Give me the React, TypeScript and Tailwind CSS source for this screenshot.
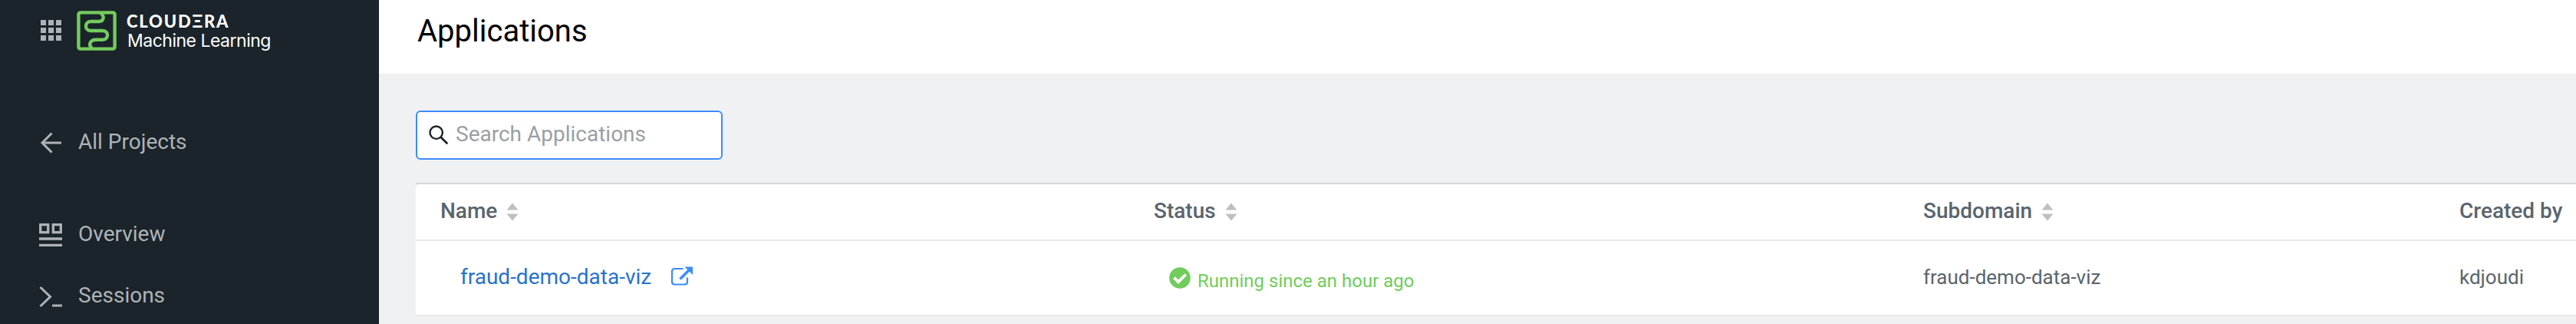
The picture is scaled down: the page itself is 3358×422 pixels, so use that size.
import type { ReactNode } from "react";

function GridIcon() {
  const cells = [0, 10, 20];
  return (
    <svg width="27" height="27" viewBox="0 0 27 27" fill="#afb3b7">
      {cells.map((y) => cells.map((x) => <rect key={`${x}-${y}`} x={x} y={y} width="7" height="7" />))}
    </svg>
  );
}

function LogoMark() {
  return (
    <svg width="52" height="52" viewBox="0 0 52 52" fill="none" stroke="#74cb5d" strokeWidth="4.4">
      <rect x="2.4" y="2.4" width="47.2" height="47.2" rx="2.4" />
      <path d="M31 3C37 7 35 14 29 14H18C10 14 10 26 18 26H34C42 26 42 37.700 34 37.700H25C17 37.700 15 45 20 49" />
    </svg>
  );
}

function BackIcon() {
  return (
    <svg width="30" height="30" viewBox="0 0 30 30" fill="none" stroke="#afb3b7" strokeWidth="3">
      <path d="M16.500 2.500L4 15L16.500 27.500M4 15H29" />
    </svg>
  );
}

function OverviewIcon() {
  return (
    <svg width="30" height="30" viewBox="0 0 30 30" fill="none" stroke="#afb3b7" strokeWidth="3.300">
      <path d="M1.700 1.700H11.700V11.700H1.700ZM18.300 1.700H28.300V11.700H18.300ZM0 20H30M0 28.300H30" />
    </svg>
  );
}

function SessionsIcon() {
  return (
    <svg width="30" height="30" viewBox="0 0 30 30" fill="none" stroke="#afb3b7" strokeWidth="3">
      <path d="M1.500 3L14.500 15.500L1.500 28M17 27H30" />
    </svg>
  );
}

function SearchIcon() {
  return (
    <svg width="26" height="26" viewBox="0 0 26 26" fill="none" stroke="#1b2329" strokeWidth="2.400">
      <circle cx="9.700" cy="9.700" r="8.200" />
      <path d="M15.500 15.500L24.300 24.300" strokeWidth="2.800" />
    </svg>
  );
}

function SortIcon() {
  return (
    <svg width="16" height="24" viewBox="0 0 16 24" fill="#bfbfbf">
      <path d="M8 0.500L15.500 9.500H0.500ZM8 23.500L15.500 14.500H0.500Z" />
    </svg>
  );
}

function ExternalIcon() {
  return (
    <svg width="30" height="26" viewBox="0 0 30 26" fill="none" stroke="#3b8cf8" strokeWidth="2.200">
      <path d="M16.500 3H5.500Q2 3 2 6.500V20Q2 23.500 5.500 23.500H18.500Q22 23.500 22 20V14.500" />
      <path d="M12.500 16.500L25 4" strokeWidth="3.600" />
      <path d="M18.500 0.500H29V11Z" fill="#3b8cf8" stroke="none" />
    </svg>
  );
}

function CheckIcon() {
  return (
    <svg width="28" height="28" viewBox="0 0 28 28" fill="none">
      <circle cx="14" cy="14" r="13.800" fill="#71cc5d" />
      <path d="M6.500 13.700L12 19.200L21.700 9.500" stroke="#fff" strokeWidth="3.800" />
    </svg>
  );
}

function NavItem({ icon, label }: { icon: ReactNode; label: string }) {
  return (
    <a className="flex h-20 shrink-0 items-center pl-[51px]">
      <span className="mt-1">{icon}</span>
      <span className="mt-0.5 ml-[21px] text-[28px] leading-10">{label}</span>
    </a>
  );
}

function HeaderCell({ label, sortable = true }: { label: string; sortable?: boolean }) {
  return (
    <div className="flex items-center gap-3 whitespace-nowrap pb-0.5 pl-8">
      <span className="text-[28px] leading-10 font-medium">{label}</span>
      {sortable && (
        <span className="mt-0.5">
          <SortIcon />
        </span>
      )}
    </div>
  );
}

export default function App() {
  return (
    <div className="flex h-[422px] w-full overflow-hidden bg-[#f0f1f3] font-[Roboto,sans-serif]">
      <aside className="flex w-[494px] shrink-0 flex-col overflow-hidden bg-[#1a242a] text-[#afb3b7]">
        <div className="flex h-36 shrink-0 items-start pl-[53px]">
          <span className="mt-[26px]">
            <GridIcon />
          </span>
          <span className="mt-[14px] ml-5">
            <LogoMark />
          </span>
          <div className="mt-4 ml-[14px] flex flex-col whitespace-nowrap text-white">
            <span className="-ml-px font-[Lato,sans-serif] text-[22px] leading-6 font-black tracking-[1.8px]">CLOUDΞRA</span>
            <span className="font-[Inter,sans-serif] text-[23px] leading-[26px] tracking-[-0.5px]">Machine Learning</span>
          </div>
        </div>
        <NavItem icon={<BackIcon />} label="All Projects" />
        <div className="h-10 shrink-0" />
        <NavItem icon={<OverviewIcon />} label="Overview" />
        <NavItem icon={<SessionsIcon />} label="Sessions" />
      </aside>

      <main className="flex min-w-0 flex-1 flex-col">
        <header className="h-24 shrink-0 bg-white pt-[17px] pl-[50px]">
          <h1 className="text-[40px] leading-[48px] text-black">Applications</h1>
        </header>

        <div className="pt-12 pl-12">
          <div className="flex h-16 w-[400px] items-center rounded-md border-2 border-[#3b8cf8] bg-white pl-[15px]">
            <SearchIcon />
            <span className="mb-0.5 ml-[9px] text-[28px] leading-10 text-[#9a9fa4]">Search Applications</span>
          </div>

          <section className="mt-[30px] border-t-2 border-[#d5d7db] text-[#5a656d]">
            <div className="grid h-[74px] grid-cols-[930px_1003px_699px_1fr] rounded-tl-md border-b-2 border-[#e7e8ea] bg-white">
              <HeaderCell label="Name" />
              <HeaderCell label="Status" />
              <HeaderCell label="Subdomain" />
              <HeaderCell label="Created by" sortable={false} />
            </div>
            <div className="grid h-[98px] grid-cols-[930px_1003px_699px_1fr] border-b-2 border-[#e7e8ea] bg-white text-[26px] leading-10">
              <div className="flex items-center pb-0.5 pl-[58px]">
                <a className="text-[28px] text-[#2a72cc]">fraud-demo-data-viz</a>
                <span className="mb-0.5 ml-[25px]">
                  <ExternalIcon />
                </span>
              </div>
              <div className="flex items-center pl-[52px] text-2xl leading-10 text-[#71cc5d]">
                <CheckIcon />
                <span className="mt-2 ml-[9px]">Running since an hour ago</span>
              </div>
              <div className="flex items-center pb-0.5 pl-8">fraud-demo-data-viz</div>
              <div className="flex items-center pb-0.5 pl-8">kdjoudi</div>
            </div>
          </section>
        </div>
      </main>
    </div>
  );
}
